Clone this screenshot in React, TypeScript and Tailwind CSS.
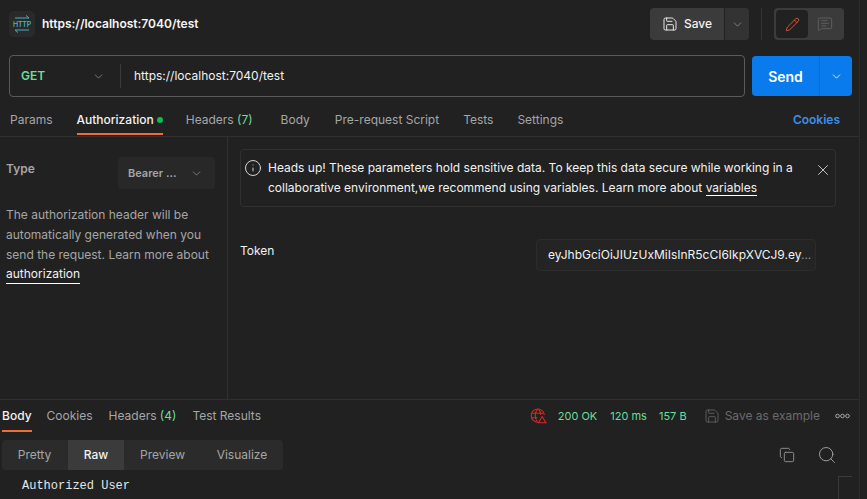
import React from "react";
import { ChevronDown, Pencil, MessageSquareText, Save, X, Info, Copy, Search } from "lucide-react";

function HttpIcon() {
  return (
    <svg width="18" height="18" viewBox="0 0 18 18" fill="none" stroke="#3fb3c4" strokeWidth="1">
      <path d="M2 3h14M13 0.500l3 2.500" />
      <path d="M2 15h14M2 15l3 2.500" />
      <text x="9" y="11.500" textAnchor="middle" fontSize="7" letterSpacing="-0.2" fill="#45bccd" stroke="none" fontFamily="Inter, sans-serif" fontWeight="500">HTTP</text>
    </svg>
  );
}

function ErrorGlobe() {
  return (
    <svg width="17" height="16" viewBox="0 0 17 16" fill="none" stroke="#d9281e" strokeWidth="1.1">
      <path d="M8 14.200A6.600 6.600 0 1 1 14.400 7" />
      <path d="M1.500 5.200h12M1.500 9.800h6M7.500 1.200c-3 3.600-3 9.200 0 12.800M8.500 1.200c1.500 1.800 2.300 3.700 2.400 5.700" />
      <path d="M12.200 8.500l3.700 6.300H8.500z" />
    </svg>
  );
}

function Dots() {
  return (
    <svg width="15" height="6" viewBox="0 0 15 6" fill="none" stroke="#a6a6a6" strokeWidth="1">
      <circle cx="2.500" cy="3" r="1.800" />
      <circle cx="7.500" cy="3" r="1.800" />
      <circle cx="12.500" cy="3" r="1.800" />
    </svg>
  );
}

function App() {
  return (
    <div className="relative flex h-[499px] w-[867px] flex-col overflow-hidden bg-[#212121] font-['Inter',sans-serif] text-[12px] text-[#f2f2f2]">
      <div className="flex h-full w-[860px] flex-col border-r border-[#2b2b2b]">
        {/* Header */}
        <div className="flex h-[48px] shrink-0 items-center pl-[9px] pr-[15px]">
          <div className="flex h-[26px] w-[26px] items-center justify-center rounded-[5px] bg-[#2a2a2a]">
            <HttpIcon />
          </div>
          <div className="ml-[7px] font-semibold text-[#f5f5f5]">https://localhost:7040/test</div>
          <div className="ml-auto flex items-center">
            <div className="flex h-[32px] w-[74px] items-center justify-center gap-[6px] rounded-l-[4px] bg-[#3b3b3b] font-medium">
              <Save size={16} strokeWidth={1.4} />
              <span>Save</span>
            </div>
            <div className="ml-px flex h-[32px] w-[24px] items-center justify-center rounded-r-[4px] bg-[#333333]">
              <ChevronDown size={13} strokeWidth={1.2} className="text-[#a6a6a6]" />
            </div>
            <div className="ml-[12px] h-[32px] w-px bg-[#333333]" />
            <div className="ml-[12px] flex h-[32px] w-[70px] items-center rounded-[4px] bg-[#3b3b3b] p-[2px]">
              <div className="flex h-[28px] w-[32px] items-center justify-center rounded-[4px] bg-[#212121]">
                <Pencil size={15} strokeWidth={1.4} className="text-[#e0603a]" />
              </div>
              <div className="flex flex-1 items-center justify-center">
                <MessageSquareText size={16} strokeWidth={1.1} className="text-[#6b6b6b]" />
              </div>
            </div>
          </div>
        </div>

        {/* URL row */}
        <div className="mt-[7px] flex h-[42px] shrink-0 items-center pl-[9px] pr-[7px]">
          <div className="flex h-[42px] w-[736px] items-center rounded-[4px] border border-[#5a5a5a]">
            <div className="flex w-[110px] items-center justify-between pl-[11px] pr-[15px]">
              <span className="font-semibold text-[#6bdd9a]">GET</span>
              <ChevronDown size={13} strokeWidth={1.2} className="text-[#a6a6a6]" />
            </div>
            <div className="h-[24px] w-px bg-[#3a3a3a]" />
            <div className="pl-[13px] text-[#f2f2f2]">https://localhost:7040/test</div>
          </div>
          <div className="ml-[7px] flex h-[40px] w-[100px] items-center rounded-[4px] bg-[#097bed] text-white">
            <div className="flex h-full w-[67px] items-center justify-center text-[14px] font-semibold">Send</div>
            <div className="h-full w-px bg-[#0a6fd4]" />
            <div className="flex flex-1 items-center justify-center">
              <ChevronDown size={13} strokeWidth={1.5} />
            </div>
          </div>
        </div>

        {/* Request tabs */}
        <div className="flex h-[40px] shrink-0 items-center border-b border-[#303030] pl-[10px] pr-[19px] pt-[6px] text-[#a6a6a6]">
          <span className="mr-[24px]">Params</span>
          <div className="relative mr-[23px] flex h-full items-center text-[#f2f2f2]">
            <span className="font-medium">Authorization</span>
            <span className="ml-[3px] h-[6px] w-[6px] rounded-full bg-[#0cbb52]" />
            <div className="absolute bottom-[1px] left-0 right-0 h-[2px] bg-[#f26b3a]" />
          </div>
          <span className="mr-[28px]">
            Headers <span className="text-[#6bdd9a]">(7)</span>
          </span>
          <span className="mr-[25px]">Body</span>
          <span className="mr-[24px]">Pre-request Script</span>
          <span className="mr-[24px]">Tests</span>
          <span>Settings</span>
          <span className="ml-auto font-semibold text-[#3d8fe8]">Cookies</span>
        </div>

        {/* Auth panel */}
        <div className="flex min-h-0 flex-1 border-b border-[#303030]">
          <div className="w-[228px] shrink-0 border-r border-[#303030] pl-[6px] pr-[12px] pt-[20px]">
            <div className="flex items-start justify-between">
              <span className="mt-[3px] font-semibold text-[#a6a6a6]">Type</span>
              <div className="flex h-[32px] w-[97px] items-center justify-between rounded-[4px] bg-[#282828] pl-[10px] pr-[12px] text-[11px] font-semibold text-[#a6a6a6]">
                <span>Bearer ...</span>
                <ChevronDown size={13} strokeWidth={1.2} className="text-[#a6a6a6]" />
              </div>
            </div>
            <p className="mt-[16px] leading-[20px] text-[#a6a6a6]">
              The authorization header will be automatically generated when you send the request. Learn more about
            </p>
            <span className="-mt-[2px] inline-block border-b border-white leading-[18px] text-[#f2f2f2]">authorization</span>
          </div>
          <div className="flex-1 pl-[12px] pr-[23px] pt-[12px]">
            <div className="flex h-[58px] items-start rounded-[4px] border border-[#303030] pl-[3px] pr-[3px] pt-[8px]">
              <Info size={18} strokeWidth={1.2} className="mt-px shrink-0 text-[#e6e6e6]" />
              <div className="ml-[6px] flex-1 leading-[20px] text-[#f2f2f2]">
                Heads up! These parameters hold sensitive data. To keep this data secure while working in a collaborative environment,we recommend using variables. Learn more about{" "}
                <span className="border-b border-white">variables</span>
              </div>
              <X size={18} strokeWidth={1.1} className="ml-[6px] mt-[3px] shrink-0 text-[#e6e6e6]" />
            </div>
            <div className="mt-[32px] flex items-center justify-between pr-[20px]">
              <span className="-mt-[8px]">Token</span>
              <div className="flex h-[32px] w-[280px] items-center overflow-hidden rounded-[4px] border border-[#2c2c2c] bg-[#242424] pl-[11px] pr-[8px]">
                <span className="whitespace-nowrap">
                  eyJhbGciOiJIUzUxMiIsInR5cCI6IkpXVCJ9.ey<span className="text-[#8f8f8f]">...</span>
                </span>
              </div>
            </div>
          </div>
        </div>

        {/* Response tabs */}
        <div className="flex h-[33px] shrink-0 items-center pb-px pl-[2px] pr-[9px] text-[#a6a6a6]">
          <div className="relative mr-[15px] flex h-full items-center font-medium text-[#f2f2f2]">
            Body
            <div className="absolute bottom-0 left-0 right-0 h-[2px] bg-[#f26b3a]" />
          </div>
          <span className="mr-[16px]">Cookies</span>
          <span className="mr-[16px]">
            Headers <span className="text-[#6bdd9a]">(4)</span>
          </span>
          <span>Test Results</span>
          <div className="ml-auto flex items-center text-[11px] text-[#6bdd9a]">
            <ErrorGlobe />
            <span className="ml-[11px]">200 OK</span>
            <span className="ml-[13px]">120 ms</span>
            <span className="ml-[12px]">157 B</span>
            <Save size={16} strokeWidth={1.2} className="ml-[17px] text-[#6b6b6b]" />
            <span className="ml-[5px] text-[12px] text-[#6b6b6b]">Save as example</span>
            <span className="ml-[15px] flex">
              <Dots />
            </span>
          </div>
        </div>

        {/* Response toolbar */}
        <div className="mt-[7px] flex h-[30px] shrink-0 items-center pl-[2px] pr-[22px]">
          <div className="flex h-[30px] w-[281px] overflow-hidden rounded-[4px] bg-[#2b2b2b] text-[#a6a6a6]">
            <div className="flex w-[66px] items-center justify-center pr-px">Pretty</div>
            <div className="flex w-[56px] items-center justify-center bg-[#3b3b3b] font-medium text-[#f2f2f2]">Raw</div>
            <div className="flex w-[77px] items-center justify-center">Preview</div>
            <div className="flex flex-1 items-center justify-center">Visualize</div>
          </div>
          <div className="ml-auto flex items-center gap-[22px] text-[#a6a6a6]">
            <Copy size={16} strokeWidth={1.2} />
            <Search size={20} strokeWidth={1.1} />
          </div>
        </div>

        <div className="pb-[6px] pl-[22px] pt-[9px] font-['Liberation_Mono',monospace] text-[12px] leading-[14px] text-[#e6e6e6]">
          Authorized User
        </div>
      </div>
      <div className="absolute left-[838px] top-[476px] h-[24px] w-[14px] border-l border-t border-[#3a3a3a]" />
    </div>
  );
}

export default App;
